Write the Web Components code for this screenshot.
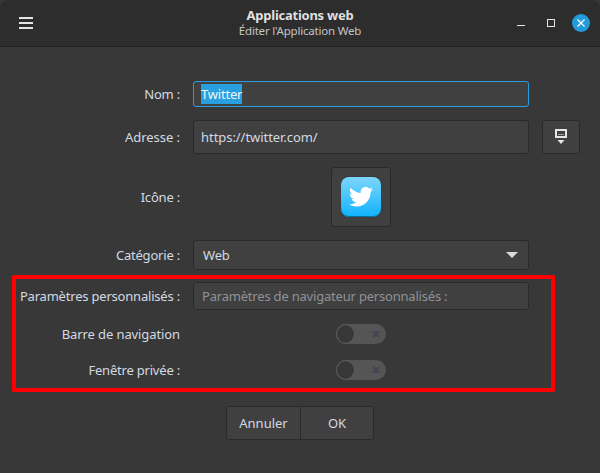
<!DOCTYPE html>
<html lang="fr">
<head>
<meta charset="utf-8">
<title>Applications web</title>
<style>
  html, body { margin: 0; padding: 0; background: #383838; }
  body { width: 600px; height: 473px; overflow: hidden; font: 13px "Noto Sans", sans-serif; letter-spacing: -0.2px; color: #d3dae3; }
</style>
</head>
<body>
<wa-window>
  <wa-header slot="header" title="Applications web" subtitle="Éditer l'Application Web"></wa-header>

  <wa-field label="Nom :" gap="13"><wa-entry focused selected height="26">Twitter</wa-entry></wa-field>
  <wa-field label="Adresse :" gap="13" style="letter-spacing:-0.05px">
    <wa-entry height="34">https://twitter.com/</wa-entry>
    <wa-button width="38" height="34" slot="extra">
      <svg width="14" height="18" viewBox="0 0 14 18" fill="none">
        <rect x="2" y="2" width="10" height="7" fill="none" stroke="#e6e6e6" stroke-width="2"/>
        <rect x="4" y="6" width="6" height="1" fill="#9a9a9a"/>
        <path d="M3.500 12h7L7 16z" fill="#e6e6e6"/>
      </svg>
    </wa-button>
  </wa-field>
  <wa-field label="Icône :" gap="13" indent="138"><wa-button width="60" height="60"><wa-twitter-icon></wa-twitter-icon></wa-button></wa-field>
  <wa-field label="Catégorie :"><wa-select>Web</wa-select></wa-field>

  <wa-highlight>
    <wa-field label="Paramètres personnalisés :" gap="14"><wa-entry placeholder height="28">Paramètres de navigateur personnalisés :</wa-entry></wa-field>
    <wa-field label="Barre de navigation" gap="16" indent="143" style="letter-spacing:-0.1px"><wa-switch></wa-switch></wa-field>
    <wa-field label="Fenêtre privée :" indent="143"><wa-switch></wa-switch></wa-field>
  </wa-highlight>

  <wa-actions>
    <wa-button width="75" height="34" joined="left" style="letter-spacing:0">Annuler</wa-button>
    <wa-button width="74" height="34" joined="right">OK</wa-button>
  </wa-actions>
</wa-window>

<script>
class WaWindow extends HTMLElement {
  constructor() {
    super();
    this.attachShadow({ mode: 'open' }).innerHTML = `
      <style>
        :host { display: flex; flex-direction: column; width: 600px; height: 473px; background: #383838; border-radius: 8px 8px 0 0; overflow: hidden; }
        main { display: flex; flex-direction: column; padding: 34px 0 0 8px; }
      </style>
      <slot name="header"></slot>
      <main><slot></slot></main>
    `;
  }
}

class WaHeader extends HTMLElement {
  constructor() {
    super();
    this.attachShadow({ mode: 'open' }).innerHTML = `
      <style>
        :host { display: grid; grid-template-columns: 1fr auto 1fr; align-items: center; height: 46px; background: #2d2d2d; border-bottom: 1px solid #222; padding: 0 10px; }
        .menu { margin-left: 9px; }
        .titles { display: flex; flex-direction: column; align-items: center; position: relative; top: -1px; }
        .title { font-weight: 700; font-size: 13px; line-height: 16px; letter-spacing: -0.25px; color: #dfdfdf; }
        .subtitle { font-size: 11.5px; line-height: 15px; color: #c4c4c4; }
        .controls { display: flex; align-items: center; justify-content: flex-end; }
        .controls svg + svg { margin-left: 20px; }
        .controls svg:last-child { margin-left: 16px; }
        svg { display: block; }
      </style>
      <svg class="menu" width="14" height="12" viewBox="0 0 14 12"><path d="M0 0h14v2H0zM0 5h14v2H0zM0 10h14v2H0z" fill="#e4e4e4"/></svg>
      <div class="titles"><span class="title"></span><span class="subtitle"></span></div>
      <div class="controls">
        <svg width="10" height="10" viewBox="0 0 10 10"><rect x="1" y="7" width="8" height="1" fill="#e4e4e4"/></svg>
        <svg width="10" height="10" viewBox="0 0 10 10"><rect x="1.500" y="1.500" width="7" height="7" fill="none" stroke="#e4e4e4" stroke-width="1"/></svg>
        <svg width="18" height="18" viewBox="0 0 18 18"><circle cx="9" cy="9" r="9" fill="#229bdd"/><path d="M5.500 5.500l7 7M12.500 5.500l-7 7" stroke="#fff" stroke-width="1.300"/></svg>
      </div>
    `;
    this.shadowRoot.querySelector('.title').textContent = this.getAttribute('title');
    this.shadowRoot.querySelector('.subtitle').textContent = this.getAttribute('subtitle');
  }
}

class WaField extends HTMLElement {
  constructor() {
    super();
    this.attachShadow({ mode: 'open' }).innerHTML = `
      <style>
        :host { display: flex; align-items: center; column-gap: 13px; }
        .label { width: 172px; flex: none; text-align: right; color: #d3dae3; white-space: nowrap; }
        .control { display: flex; flex: none; width: 336px; box-sizing: border-box; }
        .extra { display: flex; }
      </style>
      <span class="label"></span>
      <div class="control"><slot></slot></div>
      <div class="extra"><slot name="extra"></slot></div>
    `;
    this.shadowRoot.querySelector('.label').textContent = this.getAttribute('label');
    this.style.marginBottom = (this.getAttribute('gap') || 0) + 'px';
    this.shadowRoot.querySelector('.control').style.paddingLeft = (this.getAttribute('indent') || 0) + 'px';
  }
}

class WaEntry extends HTMLElement {
  constructor() {
    super();
    this.attachShadow({ mode: 'open' }).innerHTML = `
      <style>
        :host { display: flex; align-items: center; flex: 1; box-sizing: border-box; padding: 0 7px; background: #404040; border: 1px solid #2a2a2a; border-radius: 3px; color: #d3dae3; white-space: nowrap; }
        :host([focused]) { border-color: #2a9fe0; }
        :host([placeholder]) { color: #8f9296; }
        :host([placeholder]) span { padding-left: 1px; }
        span { padding: 1px 0; }
        :host([selected]) span { background: #28a0e0; color: #f0f6fa; }
      </style>
      <span><slot></slot></span>
    `;
    this.style.height = this.getAttribute('height') + 'px';
  }
}

class WaSelect extends HTMLElement {
  constructor() {
    super();
    this.attachShadow({ mode: 'open' }).innerHTML = `
      <style>
        :host { display: flex; align-items: center; justify-content: space-between; flex: 1; box-sizing: border-box; height: 30px; padding: 0 10px 0 9px; background: #404040; border: 1px solid #2a2a2a; border-radius: 3px; color: #d3dae3; }
        svg { display: block; }
      </style>
      <span><slot></slot></span>
      <svg width="12" height="6" viewBox="0 0 12 6"><path d="M0 0h12L6 6z" fill="#dcdcdc"/></svg>
    `;
  }
}

class WaButton extends HTMLElement {
  constructor() {
    super();
    this.attachShadow({ mode: 'open' }).innerHTML = `
      <style>
        :host { display: flex; align-items: center; justify-content: center; flex: none; box-sizing: border-box; background: #404040; border: 1px solid #2a2a2a; border-radius: 3px; color: #d3dae3; }
        :host([joined="left"]) { border-radius: 3px 0 0 3px; }
        :host([joined="right"]) { border-radius: 0 3px 3px 0; margin-left: -1px; }
      </style>
      <slot></slot>
    `;
    this.style.width = this.getAttribute('width') + 'px';
    this.style.height = this.getAttribute('height') + 'px';
  }
}

class WaTwitterIcon extends HTMLElement {
  constructor() {
    super();
    this.attachShadow({ mode: 'open' }).innerHTML = `
      <style>
        :host { display: flex; align-items: center; justify-content: center; width: 40px; height: 40px; border-radius: 8px; background: linear-gradient(#7dd5fb, #0fb3fe); box-shadow: inset 0 -1px 0 #0b6f9e, 0 0 1px #222; }
        svg { display: block; }
      </style>
      <svg width="24" height="20" viewBox="0 0 24 20"><path transform="translate(0 -2.300)" d="M23.953 4.570a10 10 0 01-2.825.775 4.958 4.958 0 002.163-2.723c-.951.555-2.005.959-3.127 1.184a4.920 4.920 0 00-8.384 4.482C7.690 8.095 4.067 6.130 1.640 3.162a4.822 4.822 0 00-.666 2.475c0 1.710.870 3.213 2.188 4.096a4.904 4.904 0 01-2.228-.616v.06a4.923 4.923 0 003.946 4.827 4.996 4.996 0 01-2.212.085 4.936 4.936 0 004.604 3.417 9.867 9.867 0 01-6.102 2.105c-.390 0-.779-.023-1.170-.067a13.995 13.995 0 007.557 2.209c9.053 0 13.998-7.496 13.998-13.985 0-.210 0-.420-.015-.630A9.935 9.935 0 0024 4.590z" fill="#fff"/></svg>
    `;
  }
}

class WaSwitch extends HTMLElement {
  constructor() {
    super();
    this.attachShadow({ mode: 'open' }).innerHTML = `
      <style>
        :host { display: flex; align-items: center; justify-content: space-between; box-sizing: border-box; width: 50px; height: 20px; background: #555; border-radius: 10px; padding-right: 5px; }
        .knob { width: 19px; height: 20px; box-sizing: border-box; border-radius: 50%; background: #383838; border: 1px solid #5c5c5c; }
        svg { display: block; }
      </style>
      <span class="knob"></span>
      <svg width="10" height="10" viewBox="0 0 10 10"><path d="M2 2l6 6M8 2l-6 6" stroke="#3d4150" stroke-width="1.600"/></svg>
    `;
  }
}

class WaHighlight extends HTMLElement {
  constructor() {
    super();
    this.attachShadow({ mode: 'open' }).innerHTML = `
      <style>
        :host { display: flex; flex-direction: column; box-sizing: border-box; width: 543px; height: 117px; margin: 5px 0 0 4px; padding: 3px 0 0 0; border: 4px solid #f00; border-radius: 2px; }
        div { display: flex; flex-direction: column; margin-left: -8px; width: 535px; }
      </style>
      <div><slot></slot></div>
    `;
  }
}

class WaActions extends HTMLElement {
  constructor() {
    super();
    this.attachShadow({ mode: 'open' }).innerHTML = `
      <style>
        :host { display: flex; justify-content: center; margin: 14px 0 0 0; width: 584px; }
      </style>
      <slot></slot>
    `;
  }
}

customElements.define('wa-window', WaWindow);
customElements.define('wa-header', WaHeader);
customElements.define('wa-field', WaField);
customElements.define('wa-entry', WaEntry);
customElements.define('wa-select', WaSelect);
customElements.define('wa-button', WaButton);
customElements.define('wa-twitter-icon', WaTwitterIcon);
customElements.define('wa-switch', WaSwitch);
customElements.define('wa-highlight', WaHighlight);
customElements.define('wa-actions', WaActions);
</script>
</body>
</html>
